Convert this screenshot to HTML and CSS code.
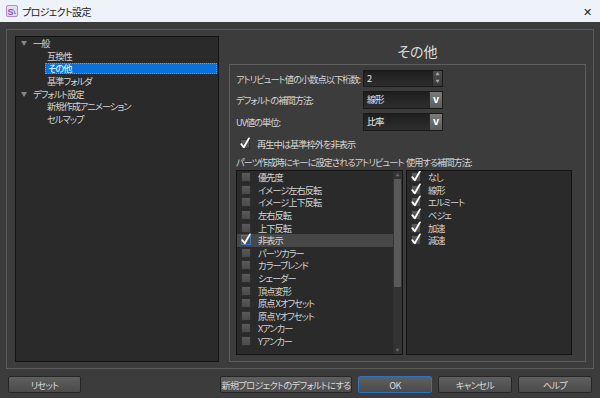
FILE: index.html
```html
<!DOCTYPE html>
<html lang="ja">
<head>
  <meta charset="UTF-8" />
  <title>プロジェクト設定</title>
  <link rel="stylesheet" href="styles.css">
</head>
<body>
  <svg width="0" height="0" class="defs">
    <symbol id="tick" viewBox="0 0 11 13">
      <path d="M1.4 7.8 L4.2 11.2 L9.8 1.4" fill="none" stroke="#fff" stroke-width="2" stroke-linecap="round" stroke-linejoin="round"/>
    </symbol>
  </svg>

  <div class="titlebar">
    <span class="app-icon">
      <svg width="12" height="12" viewBox="0 0 12 12">
        <rect x="0.5" y="0.5" width="11" height="11" rx="1.5" fill="#e8dcef" stroke="#b48ac8"/>
        <text x="1.5" y="9.5" font-size="9" font-family="Liberation Sans, sans-serif" font-weight="bold" fill="#8a4fb0">S</text>
        <path d="M7 3 L10 9 L8.5 9 Z" fill="#3a8fd8"/>
      </svg>
    </span>
    <span class="title">プロジェクト設定</span>
    <span class="close">✕</span>
  </div>

  <div class="dialog">
    <div class="frame">
      <div class="tree">
        <div class="node"><span class="twist">▼</span>一般</div>
        <div class="node child">互換性</div>
        <div class="node child selected"><span class="sel">その他</span></div>
        <div class="node child">基準フォルダ</div>
        <div class="node"><span class="twist">▼</span>デフォルト設定</div>
        <div class="node child">新規作成アニメーション</div>
        <div class="node child">セルマップ</div>
      </div>

      <div class="page">
        <div class="page-title">その他</div>
        <div class="group">
          <div class="form">
            <label>アトリビュート値の小数点以下桁数:</label>
            <div class="spin"><span class="val">2</span><span class="spin-btns"><i>▲</i><i>▼</i></span></div>
            <label>デフォルトの補間方法:</label>
            <div class="combo"><span class="val">線形</span><span class="arrow">v</span></div>
            <label>UV値の単位:</label>
            <div class="combo"><span class="val">比率</span><span class="arrow">v</span></div>
          </div>
          <div class="check-row"><span class="box"><svg class="tick"><use href="#tick"/></svg></span>再生中は基準枠外を非表示</div>

          <div class="lists">
            <div class="list-col">
              <div class="list-label">パーツ作成時にキーに設定されるアトリビュート</div>
              <div class="list">
                <div class="items">
                  <div class="item"><span class="box"></span>優先度</div>
                  <div class="item"><span class="box"></span>イメージ左右反転</div>
                  <div class="item"><span class="box"></span>イメージ上下反転</div>
                  <div class="item"><span class="box"></span>左右反転</div>
                  <div class="item"><span class="box"></span>上下反転</div>
                  <div class="item current"><span class="box focus"><svg class="tick"><use href="#tick"/></svg></span>非表示</div>
                  <div class="item"><span class="box"></span>パーツカラー</div>
                  <div class="item"><span class="box"></span>カラーブレンド</div>
                  <div class="item"><span class="box"></span>シェーダー</div>
                  <div class="item"><span class="box"></span>頂点変形</div>
                  <div class="item"><span class="box"></span>原点 Xオフセット</div>
                  <div class="item"><span class="box"></span>原点 Yオフセット</div>
                  <div class="item"><span class="box"></span>Xアンカー</div>
                  <div class="item"><span class="box"></span>Yアンカー</div>
                </div>
                <div class="scrollbar">
                  <span class="sb-arrow">▲</span>
                  <div class="sb-track"><div class="sb-thumb"></div></div>
                  <span class="sb-arrow">▼</span>
                </div>
              </div>
            </div>
            <div class="list-col">
              <div class="list-label">使用する補間方法:</div>
              <div class="list">
                <div class="items">
                  <div class="item"><span class="box"><svg class="tick"><use href="#tick"/></svg></span>なし</div>
                  <div class="item"><span class="box"><svg class="tick"><use href="#tick"/></svg></span>線形</div>
                  <div class="item"><span class="box"><svg class="tick"><use href="#tick"/></svg></span>エルミート</div>
                  <div class="item"><span class="box"><svg class="tick"><use href="#tick"/></svg></span>ベジェ</div>
                  <div class="item"><span class="box"><svg class="tick"><use href="#tick"/></svg></span>加速</div>
                  <div class="item"><span class="box"><svg class="tick"><use href="#tick"/></svg></span>減速</div>
                </div>
              </div>
            </div>
          </div>
        </div>
      </div>
    </div>

    <div class="buttons">
      <button class="btn reset">リセット</button>
      <span class="spacer"></span>
      <button class="btn wide">新規プロジェクトのデフォルトにする</button>
      <button class="btn ok">OK</button>
      <button class="btn">キャンセル</button>
      <button class="btn">ヘルプ</button>
    </div>
  </div>
</body>
</html>
```

FILE: styles.css
```css
body {
  margin: 0;
  width: 600px;
  height: 398px;
  overflow: hidden;
  font-family: "Noto Sans CJK JP", "Noto Sans", sans-serif;
  font-size: 9.2px;
  font-feature-settings: "palt";
  letter-spacing: -0.95px;
  background: #3c3c3c;
}
.defs {
  position: absolute;
}
.titlebar {
  height: 22px;
  background: #eef2f9;
  display: flex;
  align-items: center;
  padding: 0 0 0 6px;
  color: #1a1a1a;
}
.app-icon {
  display: flex;
  margin-right: 4px;
}
.title {
  font-size: 10px;
  letter-spacing: -0.6px;
  flex: 1;
}
.close {
  font-size: 11px;
  width: 26px;
  text-align: center;
  color: #222;
}
.dialog {
  height: 376px;
  background: #3c3c3c;
  color: #d4d4d4;
  padding-top: 7px;
  box-sizing: border-box;
}
.frame {
  margin: 0 6px;
  height: 340px;
  border: 1px solid #5b5b5b;
  box-sizing: border-box;
  display: flex;
  padding: 6px 7px 6px 8px;
}
.tree {
  width: 204px;
  background: #2a2a2a;
  border: 1px solid #141414;
  box-sizing: border-box;
}
.node {
  height: 12.7px;
  line-height: 12.7px;
  display: flex;
  align-items: center;
  padding-left: 17px;
  white-space: nowrap;
}
.node.child {
  padding-left: 31px;
}
.node.selected {
  padding-left: 29px;
}
.twist {
  font-size: 6px;
  color: #8a8a8a;
  width: 12px;
  margin-left: -12px;
}
.sel {
  background: #0a72d8;
  color: #fff;
  width: 172px;
  padding-left: 2px;
  border: 1px dotted #6a9bd0;
  box-sizing: border-box;
  height: 11.5px;
  line-height: 9.5px;
}
.page {
  flex: 1;
  margin-left: 10px;
  display: flex;
  flex-direction: column;
}
.page-title {
  height: 28px;
  font-size: 14px;
  letter-spacing: 0;
  text-align: center;
  color: #dcdcdc;
  line-height: 30px;
  padding-left: 20px;
}
.group {
  flex: 1;
  border: 1px solid #5e5e5e;
  padding: 5px 13px 6px 6px;
  display: flex;
  flex-direction: column;
}
.form {
  display: grid;
  grid-template-columns: 127px 80px;
  row-gap: 4px;
  align-items: center;
}
.form label {
  white-space: nowrap;
}
.spin, .combo {
  height: 17px;
  display: flex;
  background: linear-gradient(#1e1e1e, #2e2e2e);
  border: 1px solid #1a1a1a;
  box-sizing: border-box;
}
.val {
  flex: 1;
  padding-left: 3px;
  line-height: 15px;
  color: #e8e8e8;
}
.spin-btns {
  width: 9px;
  display: flex;
  flex-direction: column;
  background: linear-gradient(#4c4c4c, #3a3a3a);
  border-left: 1px solid #222;
}
.spin-btns i {
  font-style: normal;
  font-size: 4px;
  letter-spacing: 0;
  line-height: 7px;
  text-align: center;
  color: #aaa;
}
.combo {
  height: 18px;
}
.arrow {
  width: 12px;
  background: linear-gradient(#7a7a7a, #5c5c5c);
  color: #fff;
  font-weight: bold;
  font-family: "Liberation Sans", sans-serif;
  font-size: 11px;
  letter-spacing: 0;
  text-align: center;
  line-height: 15px;
  border-left: 1px solid #2a2a2a;
}
.check-row {
  margin-top: 6px;
  height: 13px;
  display: flex;
  align-items: center;
  padding-left: 4px;
}
.box {
  width: 10px;
  height: 10px;
  background: linear-gradient(#5a5a5a, #4a4a4a);
  border: 1px solid #2e2e2e;
  box-sizing: border-box;
  margin-right: 7px;
  flex: none;
  display: flex;
  justify-content: center;
  align-items: flex-end;
}
.tick {
  width: 10px;
  height: 12px;
  flex: none;
  margin-bottom: -1px;
  overflow: visible;
}
.lists {
  flex: 1;
  display: flex;
  gap: 3px;
  margin-top: 7px;
}
.list-col {
  display: flex;
  flex-direction: column;
}
.list-col:first-child {
  width: 167px;
}
.list-col:last-child {
  flex: 1;
}
.list-label {
  height: 13px;
  line-height: 10px;
  white-space: nowrap;
}
.list {
  flex: 1;
  background: #2a2a2a;
  border: 1px solid #141414;
  display: flex;
  overflow: hidden;
}
.items {
  flex: 1;
}
.item {
  height: 12.6px;
  display: flex;
  align-items: center;
  padding-left: 4px;
  white-space: nowrap;
}
.item.current {
  background: #474747;
}
.box.focus {
  border-color: #3b7ac0;
}
.scrollbar {
  width: 9px;
  background: #333;
  display: flex;
  flex-direction: column;
}
.sb-arrow {
  font-size: 4px;
  letter-spacing: 0;
  color: #666;
  text-align: center;
  height: 8px;
  line-height: 8px;
}
.sb-track {
  flex: 1;
}
.sb-thumb {
  height: 108px;
  background: #595959;
  margin: 0 1px;
}
.buttons {
  display: flex;
  gap: 6px;
  padding: 7px 8px 0 8px;
}
.spacer {
  flex: 1;
}
.btn {
  height: 17px;
  width: 74px;
  padding: 0;
  font-family: inherit;
  font-size: 9.2px;
  font-feature-settings: "palt";
  letter-spacing: -0.7px;
  white-space: nowrap;
  color: #dadada;
  background: linear-gradient(#606060, #4a4a4a);
  border: 1px solid #262626;
  border-radius: 2px;
}
.btn.reset {
  width: 73px;
}
.btn.wide {
  width: 132px;
}
.btn.ok {
  border-color: #2a72c4;
}
```
